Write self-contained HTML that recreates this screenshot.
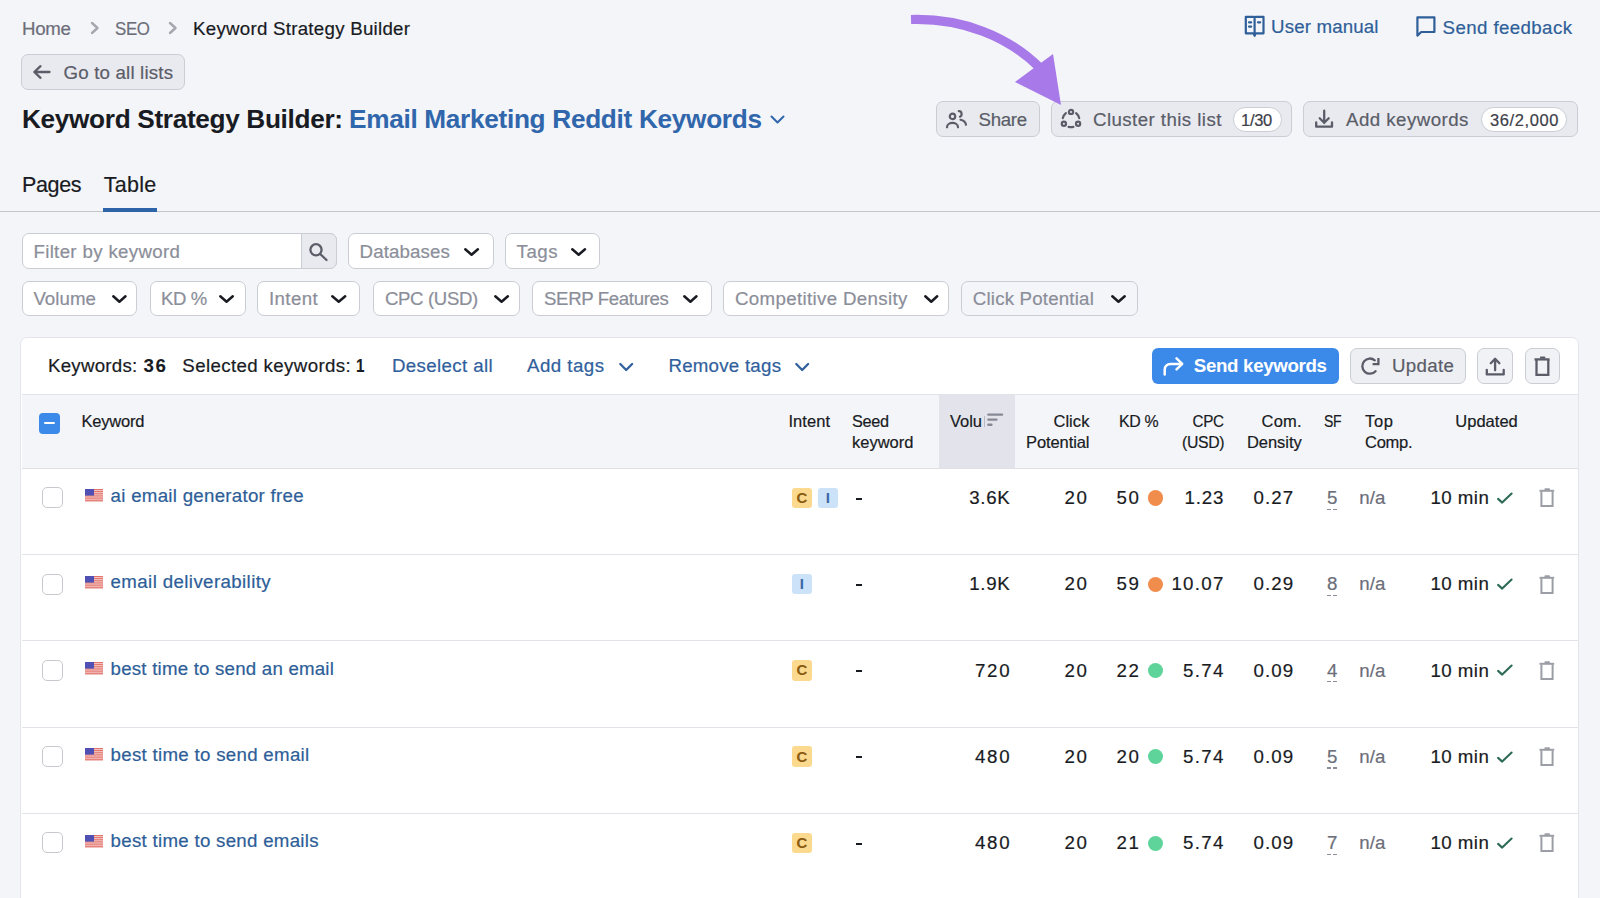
<!DOCTYPE html><html><head><meta charset="utf-8"><style>html,body{margin:0;padding:0;width:1600px;height:898px;overflow:hidden;background:#f4f5f9;}body{position:relative;font-family:"Liberation Sans", sans-serif;}.t{position:absolute;white-space:nowrap;line-height:1.1172;-webkit-text-stroke:0.2px currentColor;}</style></head><body>
<svg style="position:absolute;left:91px;top:22px;overflow:visible" width="8" height="12" viewBox="0 0 8 12"><polyline points="1,1 6.5,6 1,11" fill="none" stroke="#a5a7ae" stroke-width="2.4" stroke-linecap="round" stroke-linejoin="round"/></svg>
<svg style="position:absolute;left:169px;top:22px;overflow:visible" width="8" height="12" viewBox="0 0 8 12"><polyline points="1,1 6.5,6 1,11" fill="none" stroke="#a5a7ae" stroke-width="2.4" stroke-linecap="round" stroke-linejoin="round"/></svg>
<svg style="position:absolute;left:1244px;top:15px;overflow:visible" width="22" height="22" viewBox="0 0 22 22"><path d="M1.8 1.8 H9.8 L10.6 2.6 L11.4 1.8 H19.5 V18.3 H11.6 L10.6 20.8 L9.6 18.3 H1.8 Z M10.6 2.6 V18.3" fill="none" stroke="#2f5f98" stroke-width="2.2" stroke-linejoin="round"/><path d="M5 7.3 H7.2 M5 11.6 H7.2 M14 7.3 H16.2" stroke="#2f5f98" stroke-width="2.2" stroke-linecap="round"/></svg>
<svg style="position:absolute;left:1416px;top:16px;overflow:visible" width="20" height="21" viewBox="0 0 20 21"><path d="M1.4 1.4 H18.4 V16 H5.2 L1.4 19.6 Z" fill="none" stroke="#2f5f98" stroke-width="2.2" stroke-linejoin="round"/></svg>
<div style="position:absolute;left:21px;top:54px;width:163.5px;height:35.5px;background:#e9eaef;border:1px solid #cbcdd4;border-radius:7px;box-sizing:border-box;"></div>
<svg style="position:absolute;left:32px;top:65px;overflow:visible" width="20" height="14" viewBox="0 0 20 14"><path d="M17.5 7 H2.5 M8.5 1.2 L2.3 7 L8.5 12.8" fill="none" stroke="#5a5d68" stroke-width="2.3" stroke-linecap="round" stroke-linejoin="round"/></svg>
<svg style="position:absolute;left:770px;top:115px;overflow:visible" width="15" height="10" viewBox="0 0 15 10"><polyline points="1.5,1.5 7.5,7.5 13.5,1.5" fill="none" stroke="#3066ab" stroke-width="2" stroke-linecap="round" stroke-linejoin="round"/></svg>
<div style="position:absolute;left:936px;top:101px;width:104px;height:36px;background:#e9eaef;border:1px solid #cbcdd4;border-radius:7px;box-sizing:border-box;"></div>
<svg style="position:absolute;left:944px;top:108px;overflow:visible" width="26" height="22" viewBox="0 0 26 22"><g fill="none" stroke="#5a5d68" stroke-width="2.2" stroke-linecap="round"><circle cx="8.5" cy="8.4" r="2.7"/><path d="M3 19.3 C3 13.5 14 13.5 14 19.3"/><path d="M14.8 3.2 C18 3 18.5 7.6 16 8.7"/><path d="M16.5 11.8 C19.5 12.5 21.5 14 22 16.7"/></g></svg>
<div style="position:absolute;left:1051px;top:101px;width:241px;height:36px;background:#e9eaef;border:1px solid #cbcdd4;border-radius:7px;box-sizing:border-box;"></div>
<svg style="position:absolute;left:1058px;top:107px;overflow:visible" width="26" height="24" viewBox="0 0 26 24"><g fill="none" stroke="#5a5d68" stroke-width="2.2" stroke-linecap="round"><circle cx="13" cy="4.9" r="2.1"/><circle cx="5.9" cy="16.7" r="2.1"/><circle cx="20.1" cy="16.7" r="2.1"/><path d="M7.9 6.1 C6.3 7.4 5.2 9.1 4.8 11.1"/><path d="M18.1 6.1 C19.7 7.4 20.8 9.1 21.2 11.1"/><path d="M10.6 19.9 Q13 20.4 15.4 19.9"/></g></svg>
<div style="position:absolute;left:1233px;top:107px;width:48.5px;height:24.5px;background:#fff;border:1px solid #cbcdd4;border-radius:12.25px;box-sizing:border-box;"></div>
<div style="position:absolute;left:1303px;top:101px;width:275px;height:36px;background:#e9eaef;border:1px solid #cbcdd4;border-radius:7px;box-sizing:border-box;"></div>
<svg style="position:absolute;left:1313px;top:108px;overflow:visible" width="22" height="22" viewBox="0 0 22 22"><g fill="none" stroke="#5a5d68" stroke-width="2.3" stroke-linecap="round" stroke-linejoin="round"><path d="M11.2 2.7 V15 M6.7 10.3 L11.2 14.8 L15.7 10.3"/><path d="M3.2 14.5 V18.7 H19 V14.5"/></g></svg>
<div style="position:absolute;left:1481px;top:107px;width:86px;height:25px;background:#fff;border:1px solid #cbcdd4;border-radius:12.5px;box-sizing:border-box;"></div>
<svg style="position:absolute;left:900px;top:0px;overflow:visible" width="170" height="110" viewBox="0 0 170 110"><path d="M11 19.5 C62 18 108 36 140 68" fill="none" stroke="#a779e9" stroke-width="9.2"/><path d="M115 82 L153 54 L161 105 Z" fill="#a779e9"/></svg>
<div style="position:absolute;left:0px;top:211px;width:1600px;height:1px;background:#c3c5cb;border-radius:0px;box-sizing:border-box;"></div>
<div style="position:absolute;left:103px;top:208px;width:54px;height:4px;background:#2d64a8;border-radius:0px;box-sizing:border-box;"></div>
<div style="position:absolute;left:21.5px;top:233px;width:315px;height:36px;background:#fff;border:1px solid #cbcdd4;border-radius:7px;box-sizing:border-box;"></div>
<div style="position:absolute;left:301px;top:233px;width:35.5px;height:36px;background:#e9eaef;border:1px solid #cbcdd4;border-radius:0 7px 7px 0;box-sizing:border-box"></div>
<svg style="position:absolute;left:308px;top:242px;overflow:visible" width="22" height="20" viewBox="0 0 22 20"><g fill="none" stroke="#5a5d68" stroke-width="2.3" stroke-linecap="round"><circle cx="8" cy="7.8" r="5.6"/><path d="M12.2 12 L18.5 18"/></g></svg>
<div style="position:absolute;left:348px;top:233px;width:145.5px;height:36px;background:#fff;border:1px solid #cbcdd4;border-radius:7px;box-sizing:border-box;"></div>
<svg style="position:absolute;left:463.5px;top:247px;overflow:visible" width="15.199999999999989" height="10" viewBox="0 0 15.199999999999989 10"><polyline points="1.3,2.30 7.60,7.70 13.90,2.30" fill="none" stroke="#1a1b22" stroke-width="2.5" stroke-linecap="round" stroke-linejoin="round"/></svg>
<div style="position:absolute;left:505px;top:233px;width:95px;height:36px;background:#fff;border:1px solid #cbcdd4;border-radius:7px;box-sizing:border-box;"></div>
<svg style="position:absolute;left:570.7px;top:247px;overflow:visible" width="15.299999999999955" height="10" viewBox="0 0 15.299999999999955 10"><polyline points="1.3,2.30 7.65,7.70 14.00,2.30" fill="none" stroke="#1a1b22" stroke-width="2.5" stroke-linecap="round" stroke-linejoin="round"/></svg>
<div style="position:absolute;left:21.7px;top:280.7px;width:115.8px;height:35.7px;background:#fff;border:1px solid #cbcdd4;border-radius:7px;box-sizing:border-box;"></div>
<svg style="position:absolute;left:112px;top:294px;overflow:visible" width="14.799999999999997" height="10" viewBox="0 0 14.799999999999997 10"><polyline points="1.3,2.30 7.40,7.70 13.50,2.30" fill="none" stroke="#1a1b22" stroke-width="2.5" stroke-linecap="round" stroke-linejoin="round"/></svg>
<div style="position:absolute;left:149.6px;top:280.7px;width:96.7px;height:35.7px;background:#fff;border:1px solid #cbcdd4;border-radius:7px;box-sizing:border-box;"></div>
<svg style="position:absolute;left:219.4px;top:294px;overflow:visible" width="15.099999999999994" height="10" viewBox="0 0 15.099999999999994 10"><polyline points="1.3,2.30 7.55,7.70 13.80,2.30" fill="none" stroke="#1a1b22" stroke-width="2.5" stroke-linecap="round" stroke-linejoin="round"/></svg>
<div style="position:absolute;left:257.3px;top:280.7px;width:102.9px;height:35.7px;background:#fff;border:1px solid #cbcdd4;border-radius:7px;box-sizing:border-box;"></div>
<svg style="position:absolute;left:331px;top:294px;overflow:visible" width="15.5" height="10" viewBox="0 0 15.5 10"><polyline points="1.3,2.30 7.75,7.70 14.20,2.30" fill="none" stroke="#1a1b22" stroke-width="2.5" stroke-linecap="round" stroke-linejoin="round"/></svg>
<div style="position:absolute;left:372.8px;top:280.7px;width:147.5px;height:35.7px;background:#fff;border:1px solid #cbcdd4;border-radius:7px;box-sizing:border-box;"></div>
<svg style="position:absolute;left:494.3px;top:294px;overflow:visible" width="15.199999999999989" height="10" viewBox="0 0 15.199999999999989 10"><polyline points="1.3,2.30 7.60,7.70 13.90,2.30" fill="none" stroke="#1a1b22" stroke-width="2.5" stroke-linecap="round" stroke-linejoin="round"/></svg>
<div style="position:absolute;left:532px;top:280.7px;width:179.8px;height:35.7px;background:#fff;border:1px solid #cbcdd4;border-radius:7px;box-sizing:border-box;"></div>
<svg style="position:absolute;left:683.2px;top:294px;overflow:visible" width="14.799999999999955" height="10" viewBox="0 0 14.799999999999955 10"><polyline points="1.3,2.30 7.40,7.70 13.50,2.30" fill="none" stroke="#1a1b22" stroke-width="2.5" stroke-linecap="round" stroke-linejoin="round"/></svg>
<div style="position:absolute;left:723.2px;top:280.7px;width:225.8px;height:35.7px;background:#fff;border:1px solid #cbcdd4;border-radius:7px;box-sizing:border-box;"></div>
<svg style="position:absolute;left:924px;top:294px;overflow:visible" width="14.5" height="10" viewBox="0 0 14.5 10"><polyline points="1.3,2.30 7.25,7.70 13.20,2.30" fill="none" stroke="#1a1b22" stroke-width="2.5" stroke-linecap="round" stroke-linejoin="round"/></svg>
<div style="position:absolute;left:961.1px;top:280.7px;width:177px;height:35.7px;background:transparent;border:1px solid #cbcdd4;border-radius:7px;box-sizing:border-box;"></div>
<svg style="position:absolute;left:1111.4px;top:294px;overflow:visible" width="15.0" height="10" viewBox="0 0 15.0 10"><polyline points="1.3,2.30 7.50,7.70 13.70,2.30" fill="none" stroke="#1a1b22" stroke-width="2.5" stroke-linecap="round" stroke-linejoin="round"/></svg>
<div style="position:absolute;left:20px;top:337px;width:1559px;height:581px;background:#fff;border:1px solid #e4e5ea;border-radius:7px;box-sizing:border-box;"></div>
<div style="position:absolute;left:21.5px;top:394px;width:1556.5px;height:74.5px;background:#f4f5f9;border-radius:0px;box-sizing:border-box;"></div>
<div style="position:absolute;left:21.5px;top:393.5px;width:1556.5px;height:1px;background:#e2e3e8;border-radius:0px;box-sizing:border-box;"></div>
<div style="position:absolute;left:939.2px;top:394.5px;width:76.3px;height:74px;background:#e3e4eb;border-radius:0px;box-sizing:border-box;"></div>
<div style="position:absolute;left:21.5px;top:468px;width:1556.5px;height:1px;background:#dfe0e5;border-radius:0px;box-sizing:border-box;"></div>
<svg style="position:absolute;left:618.8px;top:362.3px;overflow:visible" width="14.400000000000091" height="10" viewBox="0 0 14.400000000000091 10"><polyline points="1.3,2.00 7.20,8.00 13.10,2.00" fill="none" stroke="#30609c" stroke-width="2.3" stroke-linecap="round" stroke-linejoin="round"/></svg>
<svg style="position:absolute;left:795.2px;top:362.3px;overflow:visible" width="14.399999999999977" height="10" viewBox="0 0 14.399999999999977 10"><polyline points="1.3,2.00 7.20,8.00 13.10,2.00" fill="none" stroke="#30609c" stroke-width="2.3" stroke-linecap="round" stroke-linejoin="round"/></svg>
<div style="position:absolute;left:1151.5px;top:347.8px;width:187.5px;height:36px;background:#3b89e8;border-radius:6px;box-sizing:border-box;"></div>
<svg style="position:absolute;left:1160px;top:354px;overflow:visible" width="26" height="24" viewBox="0 0 26 24"><g fill="none" stroke="#fff" stroke-width="2.5" stroke-linecap="round" stroke-linejoin="round"><path d="M4.7 20.6 V15.5 C4.7 12.3 7 10.1 10.5 10.1 H21.8"/><path d="M16.5 4.4 L22.2 9.9 L16.5 15.3"/></g></svg>
<div style="position:absolute;left:1350px;top:347.8px;width:115.6px;height:36px;background:#eeeff3;border:1px solid #cbcdd4;border-radius:7px;box-sizing:border-box;"></div>
<svg style="position:absolute;left:1358px;top:354px;overflow:visible" width="26" height="24" viewBox="0 0 26 24"><g fill="none" stroke="#5a5d68" stroke-width="2.3" stroke-linecap="round" stroke-linejoin="square"><path d="M16.8 6.3 A7.6 7.6 0 1 0 17.55 17.2"/><path d="M14.6 10.1 H20.4 V4" stroke-linecap="butt" stroke-linejoin="miter"/></g></svg>
<div style="position:absolute;left:1477.3px;top:348.2px;width:35.3px;height:35.4px;background:#f1f2f6;border:1px solid #cbcdd4;border-radius:7px;box-sizing:border-box;"></div>
<svg style="position:absolute;left:1484px;top:355px;overflow:visible" width="22" height="22" viewBox="0 0 22 22"><g fill="none" stroke="#5a5d68" stroke-width="2.3" stroke-linecap="round" stroke-linejoin="round"><path d="M11.1 3.8 V15.3 M6.8 8.2 L11.1 3.8 L15.4 8.2"/><path d="M2.8 14.8 V19.4 H19.7 V14.8"/></g></svg>
<div style="position:absolute;left:1524.7px;top:348.2px;width:34.9px;height:35.4px;background:#f1f2f6;border:1px solid #cbcdd4;border-radius:7px;box-sizing:border-box;"></div>
<svg style="position:absolute;left:1532px;top:355px;overflow:visible" width="20" height="22" viewBox="0 0 20 22"><g fill="none" stroke="#5a5d68" stroke-width="2.3" stroke-linejoin="miter"><path d="M2.5 4.4 H17.6"/><path d="M4.5 5 V19.9 H16.3 V5"/><path d="M9 2.6 H12.3" stroke-linecap="round"/></g></svg>
<div style="position:absolute;left:38.7px;top:413px;width:21px;height:21px;background:#3b89e8;border-radius:4px"></div>
<div style="position:absolute;left:43.8px;top:422.3px;width:10.8px;height:2.2px;background:#fff;border-radius:1.1px"></div>
<svg style="position:absolute;left:986px;top:412px;overflow:visible" width="18" height="15" viewBox="0 0 18 15"><g stroke="#868995" stroke-width="2.4" stroke-linecap="round"><path d="M2.4 2.6 H16"/><path d="M2.4 7.6 H10.4"/><path d="M2.4 12.8 H5.4"/></g></svg>
<div style="position:absolute;left:983.8px;top:415.5px;width:1.6px;height:11px;background:#b9bbc4;border-radius:0px;box-sizing:border-box;"></div>
<div style="position:absolute;left:42.4px;top:487.25px;width:20.4px;height:21px;background:#fff;border:1.3px solid #c8c9ce;border-radius:5px;box-sizing:border-box;"></div>
<svg style="position:absolute;left:85px;top:489.45px" width="18" height="13" viewBox="0 0 18 13"><rect width="18" height="13" fill="#f3dcdc"/><rect y="0.000" width="18" height="1.1" fill="#e5736a"/><rect y="1.857" width="18" height="1.1" fill="#e5736a"/><rect y="3.714" width="18" height="1.1" fill="#e5736a"/><rect y="5.571" width="18" height="1.1" fill="#e5736a"/><rect y="7.428" width="18" height="1.1" fill="#e5736a"/><rect y="9.285" width="18" height="1.1" fill="#e5736a"/><rect y="11.142" width="18" height="1.1" fill="#e5736a"/><rect width="9" height="6.6" fill="#5050b4"/></svg>
<div style="position:absolute;left:792.3px;top:487.55px;width:20px;height:20.5px;background:#fbd98f;border-radius:3px;box-sizing:border-box;"></div>
<div style="position:absolute;left:818.3px;top:487.55px;width:20px;height:20.5px;background:#cce2f9;border-radius:3px;box-sizing:border-box;"></div>
<div style="position:absolute;left:856px;top:497.55px;width:6.2px;height:2px;background:#191b23;border-radius:0px;box-sizing:border-box;"></div>
<div style="position:absolute;left:1147.8px;top:490.35px;width:15.2px;height:15.2px;border-radius:50%;background:#f08c4c"></div>
<div style="position:absolute;left:1327px;top:508.55px;width:3.6px;height:1.3px;background:#8b8e99;border-radius:0px;box-sizing:border-box;"></div>
<div style="position:absolute;left:1333.4px;top:508.55px;width:3.6px;height:1.3px;background:#8b8e99;border-radius:0px;box-sizing:border-box;"></div>
<svg style="position:absolute;left:1496px;top:491.75px;overflow:visible" width="18" height="12" viewBox="0 0 18 12"><polyline points="2.1,6.9 6.2,10.6 15.6,1.5" fill="none" stroke="#2e6b55" stroke-width="2.1" stroke-linecap="round" stroke-linejoin="round"/></svg>
<svg style="position:absolute;left:1538px;top:488.25px;overflow:visible" width="18" height="20" viewBox="0 0 18 20"><g fill="none" stroke="#9c9ea6" stroke-width="2"><path d="M1.5 2.8 H16.2"/><path d="M3.4 3.5 V17.9 H14.6 V3.5"/><path d="M7.4 1.2 H11" stroke-linecap="round"/></g></svg>
<div style="position:absolute;left:21.5px;top:554.05px;width:1556.5px;height:1px;background:#e2e3e8;border-radius:0px;box-sizing:border-box;"></div>
<div style="position:absolute;left:42.4px;top:573.55px;width:20.4px;height:21px;background:#fff;border:1.3px solid #c8c9ce;border-radius:5px;box-sizing:border-box;"></div>
<svg style="position:absolute;left:85px;top:575.75px" width="18" height="13" viewBox="0 0 18 13"><rect width="18" height="13" fill="#f3dcdc"/><rect y="0.000" width="18" height="1.1" fill="#e5736a"/><rect y="1.857" width="18" height="1.1" fill="#e5736a"/><rect y="3.714" width="18" height="1.1" fill="#e5736a"/><rect y="5.571" width="18" height="1.1" fill="#e5736a"/><rect y="7.428" width="18" height="1.1" fill="#e5736a"/><rect y="9.285" width="18" height="1.1" fill="#e5736a"/><rect y="11.142" width="18" height="1.1" fill="#e5736a"/><rect width="9" height="6.6" fill="#5050b4"/></svg>
<div style="position:absolute;left:792.3px;top:573.8499999999999px;width:20px;height:20.5px;background:#cce2f9;border-radius:3px;box-sizing:border-box;"></div>
<div style="position:absolute;left:856px;top:583.8499999999999px;width:6.2px;height:2px;background:#191b23;border-radius:0px;box-sizing:border-box;"></div>
<div style="position:absolute;left:1147.8px;top:576.65px;width:15.2px;height:15.2px;border-radius:50%;background:#f08c4c"></div>
<div style="position:absolute;left:1327px;top:594.8499999999999px;width:3.6px;height:1.3px;background:#8b8e99;border-radius:0px;box-sizing:border-box;"></div>
<div style="position:absolute;left:1333.4px;top:594.8499999999999px;width:3.6px;height:1.3px;background:#8b8e99;border-radius:0px;box-sizing:border-box;"></div>
<svg style="position:absolute;left:1496px;top:578.05px;overflow:visible" width="18" height="12" viewBox="0 0 18 12"><polyline points="2.1,6.9 6.2,10.6 15.6,1.5" fill="none" stroke="#2e6b55" stroke-width="2.1" stroke-linecap="round" stroke-linejoin="round"/></svg>
<svg style="position:absolute;left:1538px;top:574.55px;overflow:visible" width="18" height="20" viewBox="0 0 18 20"><g fill="none" stroke="#9c9ea6" stroke-width="2"><path d="M1.5 2.8 H16.2"/><path d="M3.4 3.5 V17.9 H14.6 V3.5"/><path d="M7.4 1.2 H11" stroke-linecap="round"/></g></svg>
<div style="position:absolute;left:21.5px;top:640.35px;width:1556.5px;height:1px;background:#e2e3e8;border-radius:0px;box-sizing:border-box;"></div>
<div style="position:absolute;left:42.4px;top:659.85px;width:20.4px;height:21px;background:#fff;border:1.3px solid #c8c9ce;border-radius:5px;box-sizing:border-box;"></div>
<svg style="position:absolute;left:85px;top:662.05px" width="18" height="13" viewBox="0 0 18 13"><rect width="18" height="13" fill="#f3dcdc"/><rect y="0.000" width="18" height="1.1" fill="#e5736a"/><rect y="1.857" width="18" height="1.1" fill="#e5736a"/><rect y="3.714" width="18" height="1.1" fill="#e5736a"/><rect y="5.571" width="18" height="1.1" fill="#e5736a"/><rect y="7.428" width="18" height="1.1" fill="#e5736a"/><rect y="9.285" width="18" height="1.1" fill="#e5736a"/><rect y="11.142" width="18" height="1.1" fill="#e5736a"/><rect width="9" height="6.6" fill="#5050b4"/></svg>
<div style="position:absolute;left:792.3px;top:660.15px;width:20px;height:20.5px;background:#fbd98f;border-radius:3px;box-sizing:border-box;"></div>
<div style="position:absolute;left:856px;top:670.15px;width:6.2px;height:2px;background:#191b23;border-radius:0px;box-sizing:border-box;"></div>
<div style="position:absolute;left:1147.8px;top:662.95px;width:15.2px;height:15.2px;border-radius:50%;background:#5fd49a"></div>
<div style="position:absolute;left:1327px;top:681.15px;width:3.6px;height:1.3px;background:#8b8e99;border-radius:0px;box-sizing:border-box;"></div>
<div style="position:absolute;left:1333.4px;top:681.15px;width:3.6px;height:1.3px;background:#8b8e99;border-radius:0px;box-sizing:border-box;"></div>
<svg style="position:absolute;left:1496px;top:664.35px;overflow:visible" width="18" height="12" viewBox="0 0 18 12"><polyline points="2.1,6.9 6.2,10.6 15.6,1.5" fill="none" stroke="#2e6b55" stroke-width="2.1" stroke-linecap="round" stroke-linejoin="round"/></svg>
<svg style="position:absolute;left:1538px;top:660.85px;overflow:visible" width="18" height="20" viewBox="0 0 18 20"><g fill="none" stroke="#9c9ea6" stroke-width="2"><path d="M1.5 2.8 H16.2"/><path d="M3.4 3.5 V17.9 H14.6 V3.5"/><path d="M7.4 1.2 H11" stroke-linecap="round"/></g></svg>
<div style="position:absolute;left:21.5px;top:726.65px;width:1556.5px;height:1px;background:#e2e3e8;border-radius:0px;box-sizing:border-box;"></div>
<div style="position:absolute;left:42.4px;top:746.15px;width:20.4px;height:21px;background:#fff;border:1.3px solid #c8c9ce;border-radius:5px;box-sizing:border-box;"></div>
<svg style="position:absolute;left:85px;top:748.35px" width="18" height="13" viewBox="0 0 18 13"><rect width="18" height="13" fill="#f3dcdc"/><rect y="0.000" width="18" height="1.1" fill="#e5736a"/><rect y="1.857" width="18" height="1.1" fill="#e5736a"/><rect y="3.714" width="18" height="1.1" fill="#e5736a"/><rect y="5.571" width="18" height="1.1" fill="#e5736a"/><rect y="7.428" width="18" height="1.1" fill="#e5736a"/><rect y="9.285" width="18" height="1.1" fill="#e5736a"/><rect y="11.142" width="18" height="1.1" fill="#e5736a"/><rect width="9" height="6.6" fill="#5050b4"/></svg>
<div style="position:absolute;left:792.3px;top:746.4499999999999px;width:20px;height:20.5px;background:#fbd98f;border-radius:3px;box-sizing:border-box;"></div>
<div style="position:absolute;left:856px;top:756.4499999999999px;width:6.2px;height:2px;background:#191b23;border-radius:0px;box-sizing:border-box;"></div>
<div style="position:absolute;left:1147.8px;top:749.25px;width:15.2px;height:15.2px;border-radius:50%;background:#5fd49a"></div>
<div style="position:absolute;left:1327px;top:767.4499999999999px;width:3.6px;height:1.3px;background:#8b8e99;border-radius:0px;box-sizing:border-box;"></div>
<div style="position:absolute;left:1333.4px;top:767.4499999999999px;width:3.6px;height:1.3px;background:#8b8e99;border-radius:0px;box-sizing:border-box;"></div>
<svg style="position:absolute;left:1496px;top:750.65px;overflow:visible" width="18" height="12" viewBox="0 0 18 12"><polyline points="2.1,6.9 6.2,10.6 15.6,1.5" fill="none" stroke="#2e6b55" stroke-width="2.1" stroke-linecap="round" stroke-linejoin="round"/></svg>
<svg style="position:absolute;left:1538px;top:747.15px;overflow:visible" width="18" height="20" viewBox="0 0 18 20"><g fill="none" stroke="#9c9ea6" stroke-width="2"><path d="M1.5 2.8 H16.2"/><path d="M3.4 3.5 V17.9 H14.6 V3.5"/><path d="M7.4 1.2 H11" stroke-linecap="round"/></g></svg>
<div style="position:absolute;left:21.5px;top:812.95px;width:1556.5px;height:1px;background:#e2e3e8;border-radius:0px;box-sizing:border-box;"></div>
<div style="position:absolute;left:42.4px;top:832.45px;width:20.4px;height:21px;background:#fff;border:1.3px solid #c8c9ce;border-radius:5px;box-sizing:border-box;"></div>
<svg style="position:absolute;left:85px;top:834.65px" width="18" height="13" viewBox="0 0 18 13"><rect width="18" height="13" fill="#f3dcdc"/><rect y="0.000" width="18" height="1.1" fill="#e5736a"/><rect y="1.857" width="18" height="1.1" fill="#e5736a"/><rect y="3.714" width="18" height="1.1" fill="#e5736a"/><rect y="5.571" width="18" height="1.1" fill="#e5736a"/><rect y="7.428" width="18" height="1.1" fill="#e5736a"/><rect y="9.285" width="18" height="1.1" fill="#e5736a"/><rect y="11.142" width="18" height="1.1" fill="#e5736a"/><rect width="9" height="6.6" fill="#5050b4"/></svg>
<div style="position:absolute;left:792.3px;top:832.75px;width:20px;height:20.5px;background:#fbd98f;border-radius:3px;box-sizing:border-box;"></div>
<div style="position:absolute;left:856px;top:842.75px;width:6.2px;height:2px;background:#191b23;border-radius:0px;box-sizing:border-box;"></div>
<div style="position:absolute;left:1147.8px;top:835.55px;width:15.2px;height:15.2px;border-radius:50%;background:#5fd49a"></div>
<div style="position:absolute;left:1327px;top:853.75px;width:3.6px;height:1.3px;background:#8b8e99;border-radius:0px;box-sizing:border-box;"></div>
<div style="position:absolute;left:1333.4px;top:853.75px;width:3.6px;height:1.3px;background:#8b8e99;border-radius:0px;box-sizing:border-box;"></div>
<svg style="position:absolute;left:1496px;top:836.95px;overflow:visible" width="18" height="12" viewBox="0 0 18 12"><polyline points="2.1,6.9 6.2,10.6 15.6,1.5" fill="none" stroke="#2e6b55" stroke-width="2.1" stroke-linecap="round" stroke-linejoin="round"/></svg>
<svg style="position:absolute;left:1538px;top:833.45px;overflow:visible" width="18" height="20" viewBox="0 0 18 20"><g fill="none" stroke="#9c9ea6" stroke-width="2"><path d="M1.5 2.8 H16.2"/><path d="M3.4 3.5 V17.9 H14.6 V3.5"/><path d="M7.4 1.2 H11" stroke-linecap="round"/></g></svg>
<div class="t" style="left:22.00px;top:18.87px;font-size:18.7px;font-weight:400;color:#6c6e79;letter-spacing:-0.286px;">Home</div>
<div class="t" style="left:114.50px;top:18.87px;font-size:18.7px;font-weight:400;color:#6c6e79;letter-spacing:-0.350px;transform:scaleX(0.9028);transform-origin:left center;">SEO</div>
<div class="t" style="left:193.00px;top:18.87px;font-size:18.7px;font-weight:400;color:#191b23;letter-spacing:0.267px;">Keyword Strategy Builder</div>
<div class="t" style="left:1271.00px;top:17.17px;font-size:18.7px;font-weight:400;color:#2f5f98;letter-spacing:0.155px;">User manual</div>
<div class="t" style="left:1442.60px;top:18.17px;font-size:18.7px;font-weight:400;color:#2f5f98;letter-spacing:0.393px;">Send feedback</div>
<div class="t" style="left:63.50px;top:62.67px;font-size:18.7px;font-weight:400;color:#5a5d68;letter-spacing:0.180px;">Go to all lists</div>
<div class="t" style="left:22.00px;top:104.98px;font-size:26.2px;font-weight:700;color:#191b23;letter-spacing:-0.328px;-webkit-text-stroke:0.05px currentColor;">Keyword Strategy Builder:</div>
<div class="t" style="left:349.00px;top:104.98px;font-size:26.2px;font-weight:700;color:#3066ab;letter-spacing:-0.301px;-webkit-text-stroke:0.05px currentColor;">Email Marketing Reddit Keywords</div>
<div class="t" style="left:978.60px;top:109.67px;font-size:18.7px;font-weight:400;color:#5a5d68;letter-spacing:-0.350px;">Share</div>
<div class="t" style="left:1093.00px;top:109.67px;font-size:18.7px;font-weight:400;color:#5a5d68;letter-spacing:0.431px;">Cluster this list</div>
<div class="t" style="left:1241.00px;top:110.86px;font-size:16.5px;font-weight:400;color:#3c3e48;letter-spacing:-0.275px;">1/30</div>
<div class="t" style="left:1346.00px;top:109.67px;font-size:18.7px;font-weight:400;color:#5a5d68;letter-spacing:0.457px;">Add keywords</div>
<div class="t" style="left:1490.00px;top:110.86px;font-size:16.5px;font-weight:400;color:#3c3e48;letter-spacing:0.595px;">36/2,000</div>
<div class="t" style="left:22.00px;top:172.64px;font-size:21.5px;font-weight:400;color:#191b23;letter-spacing:-0.350px;">Pages</div>
<div class="t" style="left:103.80px;top:172.64px;font-size:21.5px;font-weight:400;color:#191b23;letter-spacing:0.273px;">Table</div>
<div class="t" style="left:33.40px;top:241.87px;font-size:18.7px;font-weight:400;color:#8b8e99;letter-spacing:0.335px;">Filter by keyword</div>
<div class="t" style="left:359.60px;top:241.87px;font-size:18.7px;font-weight:400;color:#8b8e99;letter-spacing:0.107px;">Databases</div>
<div class="t" style="left:516.60px;top:241.87px;font-size:18.7px;font-weight:400;color:#8b8e99;letter-spacing:0.505px;">Tags</div>
<div class="t" style="left:33.40px;top:288.57px;font-size:18.7px;font-weight:400;color:#8b8e99;letter-spacing:0.051px;">Volume</div>
<div class="t" style="left:161.30px;top:288.57px;font-size:18.7px;font-weight:400;color:#8b8e99;letter-spacing:-0.350px;transform:scaleX(0.9908);transform-origin:left center;">KD %</div>
<div class="t" style="left:269.00px;top:288.57px;font-size:18.7px;font-weight:400;color:#8b8e99;letter-spacing:0.367px;">Intent</div>
<div class="t" style="left:384.50px;top:288.57px;font-size:18.7px;font-weight:400;color:#8b8e99;letter-spacing:-0.350px;transform:scaleX(0.9940);transform-origin:left center;">CPC (USD)</div>
<div class="t" style="left:543.70px;top:288.57px;font-size:18.7px;font-weight:400;color:#8b8e99;letter-spacing:-0.350px;transform:scaleX(0.9960);transform-origin:left center;">SERP Features</div>
<div class="t" style="left:734.90px;top:288.57px;font-size:18.7px;font-weight:400;color:#8b8e99;letter-spacing:0.352px;">Competitive Density</div>
<div class="t" style="left:972.80px;top:288.57px;font-size:18.7px;font-weight:400;color:#8b8e99;letter-spacing:0.185px;">Click Potential</div>
<div class="t" style="left:48.00px;top:356.47px;font-size:18.7px;font-weight:400;color:#191b23;letter-spacing:0.244px;">Keywords:</div>
<div class="t" style="left:143.50px;top:356.47px;font-size:18.7px;font-weight:700;color:#191b23;letter-spacing:1.503px;-webkit-text-stroke:0.05px currentColor;">36</div>
<div class="t" style="left:182.30px;top:356.47px;font-size:18.7px;font-weight:400;color:#191b23;letter-spacing:0.374px;">Selected keywords:</div>
<div class="t" style="left:356.00px;top:356.47px;font-size:18.7px;font-weight:700;color:#191b23;letter-spacing:-0.350px;transform:scaleX(0.8168);transform-origin:left center;-webkit-text-stroke:0.05px currentColor;">1</div>
<div class="t" style="left:392.00px;top:356.47px;font-size:18.7px;font-weight:400;color:#30609c;letter-spacing:0.363px;">Deselect all</div>
<div class="t" style="left:527.00px;top:356.47px;font-size:18.7px;font-weight:400;color:#30609c;letter-spacing:0.462px;">Add tags</div>
<div class="t" style="left:668.40px;top:356.47px;font-size:18.7px;font-weight:400;color:#30609c;letter-spacing:0.249px;">Remove tags</div>
<div class="t" style="left:1193.80px;top:356.47px;font-size:18.7px;font-weight:700;color:#ffffff;letter-spacing:-0.324px;-webkit-text-stroke:0.05px currentColor;">Send keywords</div>
<div class="t" style="left:1392.00px;top:356.47px;font-size:18.7px;font-weight:400;color:#5a5d68;letter-spacing:0.347px;">Update</div>
<div class="t" style="left:81.50px;top:411.76px;font-size:16.5px;font-weight:400;color:#191b23;letter-spacing:-0.201px;">Keyword</div>
<div class="t" style="left:788.40px;top:411.76px;font-size:16.5px;font-weight:400;color:#191b23;letter-spacing:0.061px;">Intent</div>
<div class="t" style="left:852.00px;top:411.76px;font-size:16.5px;font-weight:400;color:#191b23;letter-spacing:-0.350px;transform:scaleX(0.9867);transform-origin:left center;">Seed</div>
<div class="t" style="left:852.00px;top:432.86px;font-size:16.5px;font-weight:400;color:#191b23;letter-spacing:0.008px;">keyword</div>
<div class="t" style="left:950.00px;top:411.76px;font-size:16.5px;font-weight:400;color:#191b23;letter-spacing:-0.042px;">Volu</div>
<div class="t" style="right:510.54px;top:411.76px;font-size:16.5px;font-weight:400;color:#191b23;letter-spacing:0.062px;">Click</div>
<div class="t" style="left:1026.00px;top:432.86px;font-size:16.5px;font-weight:400;color:#191b23;letter-spacing:-0.090px;">Potential</div>
<div class="t" style="left:1118.75px;top:411.76px;font-size:16.5px;font-weight:400;color:#191b23;letter-spacing:-0.350px;transform:scaleX(0.9626);transform-origin:left center;">KD %</div>
<div class="t" style="right:375.95px;top:411.76px;font-size:16.5px;font-weight:400;color:#191b23;letter-spacing:-0.350px;transform:scaleX(0.9226);transform-origin:right center;">CPC</div>
<div class="t" style="left:1182.00px;top:432.86px;font-size:16.5px;font-weight:400;color:#191b23;letter-spacing:-0.350px;transform:scaleX(0.9566);transform-origin:left center;">(USD)</div>
<div class="t" style="right:298.21px;top:411.76px;font-size:16.5px;font-weight:400;color:#191b23;letter-spacing:0.193px;">Com.</div>
<div class="t" style="left:1247.00px;top:432.86px;font-size:16.5px;font-weight:400;color:#191b23;letter-spacing:-0.055px;">Density</div>
<div class="t" style="left:1324.40px;top:411.76px;font-size:16.5px;font-weight:400;color:#191b23;letter-spacing:-0.350px;transform:scaleX(0.8484);transform-origin:left center;">SF</div>
<div class="t" style="left:1365.00px;top:411.76px;font-size:16.5px;font-weight:400;color:#191b23;letter-spacing:0.695px;">Top</div>
<div class="t" style="left:1365.00px;top:432.86px;font-size:16.5px;font-weight:400;color:#191b23;letter-spacing:-0.277px;">Comp.</div>
<div class="t" style="left:1455.30px;top:411.76px;font-size:16.5px;font-weight:400;color:#191b23;letter-spacing:0.018px;">Updated</div>
<div class="t" style="left:110.60px;top:486.12px;font-size:18.7px;font-weight:400;color:#2d5e98;letter-spacing:0.273px;">ai email generator free</div>
<div class="t" style="left:796.60px;top:489.87px;font-size:15px;font-weight:700;color:#8a5a10;-webkit-text-stroke:0.05px currentColor;">C</div>
<div class="t" style="left:825.80px;top:489.87px;font-size:15px;font-weight:700;color:#3a68a6;-webkit-text-stroke:0.05px currentColor;">I</div>
<div class="t" style="right:589.78px;top:487.92px;font-size:18.7px;font-weight:400;color:#191b23;letter-spacing:0.616px;">3.6K</div>
<div class="t" style="right:511.60px;top:487.92px;font-size:18.7px;font-weight:400;color:#191b23;letter-spacing:1.603px;">20</div>
<div class="t" style="left:1116.50px;top:487.92px;font-size:18.7px;font-weight:400;color:#191b23;letter-spacing:1.703px;">50</div>
<div class="t" style="right:375.72px;top:487.92px;font-size:18.7px;font-weight:400;color:#191b23;letter-spacing:0.875px;">1.23</div>
<div class="t" style="right:305.83px;top:487.92px;font-size:18.7px;font-weight:400;color:#191b23;letter-spacing:1.075px;">0.27</div>
<div class="t" style="left:1327.00px;top:487.92px;font-size:18.7px;font-weight:400;color:#6c6e79;">5</div>
<div class="t" style="left:1359.30px;top:487.92px;font-size:18.7px;font-weight:400;color:#6c6e79;letter-spacing:0.008px;">n/a</div>
<div class="t" style="left:1430.40px;top:487.92px;font-size:18.7px;font-weight:400;color:#191b23;letter-spacing:0.461px;">10 min</div>
<div class="t" style="left:110.60px;top:572.42px;font-size:18.7px;font-weight:400;color:#2d5e98;letter-spacing:0.385px;">email deliverability</div>
<div class="t" style="left:799.80px;top:576.17px;font-size:15px;font-weight:700;color:#3a68a6;-webkit-text-stroke:0.05px currentColor;">I</div>
<div class="t" style="right:589.78px;top:574.22px;font-size:18.7px;font-weight:400;color:#191b23;letter-spacing:0.616px;">1.9K</div>
<div class="t" style="right:511.60px;top:574.22px;font-size:18.7px;font-weight:400;color:#191b23;letter-spacing:1.603px;">20</div>
<div class="t" style="left:1116.50px;top:574.22px;font-size:18.7px;font-weight:400;color:#191b23;letter-spacing:1.703px;">59</div>
<div class="t" style="right:375.29px;top:574.22px;font-size:18.7px;font-weight:400;color:#191b23;letter-spacing:1.309px;">10.07</div>
<div class="t" style="right:305.83px;top:574.22px;font-size:18.7px;font-weight:400;color:#191b23;letter-spacing:1.075px;">0.29</div>
<div class="t" style="left:1327.00px;top:574.22px;font-size:18.7px;font-weight:400;color:#6c6e79;">8</div>
<div class="t" style="left:1359.30px;top:574.22px;font-size:18.7px;font-weight:400;color:#6c6e79;letter-spacing:0.008px;">n/a</div>
<div class="t" style="left:1430.40px;top:574.22px;font-size:18.7px;font-weight:400;color:#191b23;letter-spacing:0.461px;">10 min</div>
<div class="t" style="left:110.60px;top:658.72px;font-size:18.7px;font-weight:400;color:#2d5e98;letter-spacing:0.206px;">best time to send an email</div>
<div class="t" style="left:796.60px;top:662.47px;font-size:15px;font-weight:700;color:#8a5a10;-webkit-text-stroke:0.05px currentColor;">C</div>
<div class="t" style="right:588.64px;top:660.52px;font-size:18.7px;font-weight:400;color:#191b23;letter-spacing:1.756px;">720</div>
<div class="t" style="right:511.60px;top:660.52px;font-size:18.7px;font-weight:400;color:#191b23;letter-spacing:1.603px;">20</div>
<div class="t" style="left:1116.50px;top:660.52px;font-size:18.7px;font-weight:400;color:#191b23;letter-spacing:1.703px;">22</div>
<div class="t" style="right:375.29px;top:660.52px;font-size:18.7px;font-weight:400;color:#191b23;letter-spacing:1.308px;">5.74</div>
<div class="t" style="right:305.83px;top:660.52px;font-size:18.7px;font-weight:400;color:#191b23;letter-spacing:1.075px;">0.09</div>
<div class="t" style="left:1327.00px;top:660.52px;font-size:18.7px;font-weight:400;color:#6c6e79;">4</div>
<div class="t" style="left:1359.30px;top:660.52px;font-size:18.7px;font-weight:400;color:#6c6e79;letter-spacing:0.008px;">n/a</div>
<div class="t" style="left:1430.40px;top:660.52px;font-size:18.7px;font-weight:400;color:#191b23;letter-spacing:0.461px;">10 min</div>
<div class="t" style="left:110.60px;top:745.02px;font-size:18.7px;font-weight:400;color:#2d5e98;letter-spacing:0.292px;">best time to send email</div>
<div class="t" style="left:796.60px;top:748.77px;font-size:15px;font-weight:700;color:#8a5a10;-webkit-text-stroke:0.05px currentColor;">C</div>
<div class="t" style="right:588.64px;top:746.82px;font-size:18.7px;font-weight:400;color:#191b23;letter-spacing:1.756px;">480</div>
<div class="t" style="right:511.60px;top:746.82px;font-size:18.7px;font-weight:400;color:#191b23;letter-spacing:1.603px;">20</div>
<div class="t" style="left:1116.50px;top:746.82px;font-size:18.7px;font-weight:400;color:#191b23;letter-spacing:1.703px;">20</div>
<div class="t" style="right:375.29px;top:746.82px;font-size:18.7px;font-weight:400;color:#191b23;letter-spacing:1.308px;">5.74</div>
<div class="t" style="right:305.83px;top:746.82px;font-size:18.7px;font-weight:400;color:#191b23;letter-spacing:1.075px;">0.09</div>
<div class="t" style="left:1327.00px;top:746.82px;font-size:18.7px;font-weight:400;color:#6c6e79;">5</div>
<div class="t" style="left:1359.30px;top:746.82px;font-size:18.7px;font-weight:400;color:#6c6e79;letter-spacing:0.008px;">n/a</div>
<div class="t" style="left:1430.40px;top:746.82px;font-size:18.7px;font-weight:400;color:#191b23;letter-spacing:0.461px;">10 min</div>
<div class="t" style="left:110.60px;top:831.32px;font-size:18.7px;font-weight:400;color:#2d5e98;letter-spacing:0.282px;">best time to send emails</div>
<div class="t" style="left:796.60px;top:835.07px;font-size:15px;font-weight:700;color:#8a5a10;-webkit-text-stroke:0.05px currentColor;">C</div>
<div class="t" style="right:588.64px;top:833.12px;font-size:18.7px;font-weight:400;color:#191b23;letter-spacing:1.756px;">480</div>
<div class="t" style="right:511.60px;top:833.12px;font-size:18.7px;font-weight:400;color:#191b23;letter-spacing:1.603px;">20</div>
<div class="t" style="left:1116.50px;top:833.12px;font-size:18.7px;font-weight:400;color:#191b23;letter-spacing:1.703px;">21</div>
<div class="t" style="right:375.29px;top:833.12px;font-size:18.7px;font-weight:400;color:#191b23;letter-spacing:1.308px;">5.74</div>
<div class="t" style="right:305.83px;top:833.12px;font-size:18.7px;font-weight:400;color:#191b23;letter-spacing:1.075px;">0.09</div>
<div class="t" style="left:1327.00px;top:833.12px;font-size:18.7px;font-weight:400;color:#6c6e79;">7</div>
<div class="t" style="left:1359.30px;top:833.12px;font-size:18.7px;font-weight:400;color:#6c6e79;letter-spacing:0.008px;">n/a</div>
<div class="t" style="left:1430.40px;top:833.12px;font-size:18.7px;font-weight:400;color:#191b23;letter-spacing:0.461px;">10 min</div>
</body></html>
